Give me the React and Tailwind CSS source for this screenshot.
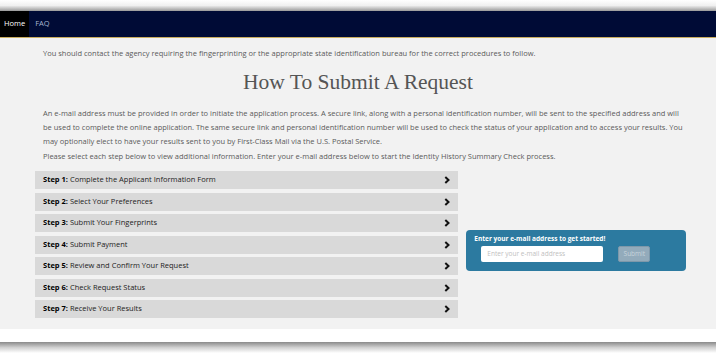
import React from "react";

const steps = [
  "Complete the Applicant Information Form",
  "Select Your Preferences",
  "Submit Your Fingerprints",
  "Submit Payment",
  "Review and Confirm Your Request",
  "Check Request Status",
  "Receive Your Results",
];

function Chevron() {
  return (
    <svg width="6" height="8" viewBox="0 0 6 8" className="block">
      <polyline points="1.3,1 4.5,4 1.3,7" fill="none" stroke="#111" strokeWidth="2" />
    </svg>
  );
}

export default function App() {
  const font = { fontFamily: '"Open Sans", "Noto Sans", sans-serif' };
  return (
    <div className="w-[716px] h-[353px] bg-white overflow-hidden flex flex-col" style={font}>
      <div className="h-[11px] bg-gradient-to-b from-white via-[#f0f0f0] to-[#9a9a9a]" />
      <nav className="h-[27px] bg-[#000b36] border-b border-[#c9ad5f] flex items-stretch">
        <div className="bg-[#000000] px-[4px] flex items-center text-white text-[7.5px]">Home</div>
        <div className="px-[6px] flex items-center text-[#a9b4cf] text-[7.5px]">FAQ</div>
      </nav>
      <main className="h-[291px] bg-[#f2f2f2] pl-[35px] pr-[30px] pt-[8px] text-[#5a5a5a]">
        <p className="pl-[8px] text-[7.5px] leading-[14px]">
          You should contact the agency requiring the fingerprinting or the appropriate state identification bureau for the correct procedures to follow.
        </p>
        <h1
          className="text-center text-[21.5px] leading-[30px] mt-[7px] mb-[9px] text-[#555] pr-[5px]"
          style={{ fontFamily: '"Liberation Serif", Georgia, serif' }}
        >
          How To Submit A Request
        </h1>
        <p className="pl-[8px] text-[7.5px] leading-[14px]">
          An e-mail address must be provided in order to initiate the application process. A secure link, along with a personal identification number, will be sent to the specified address and will be used to complete the online application. The same secure link and personal identification number will be used to check the status of your application and to access your results. You may optionally elect to have your results sent to you by First-Class Mail via the U.S. Postal Service.
        </p>
        <p className="pl-[8px] text-[7.5px] leading-[14px] mt-[1px]">
          Please select each step below to view additional information. Enter your e-mail address below to start the Identity History Summary Check process.
        </p>
        <div className="flex mt-[8px] gap-[8px]">
          <div className="w-[424px] flex flex-col gap-[3.5px]">
            {steps.map((s, i) => (
              <div key={i} className="h-[18px] bg-[#d9d9d9] flex items-center justify-between pl-[8px] pr-[8px] text-[7.5px] text-[#222]">
                <span>
                  <span className="font-bold text-black">Step {i + 1}:</span> {s}
                </span>
                <Chevron />
              </div>
            ))}
          </div>
          <div className="w-[220px] h-[41px] mt-[59px] bg-[#2c7aa0] rounded-[4px] px-[8px] pt-[5px]">
            <div className="text-white font-bold text-[6.5px] leading-[8px]">Enter your e-mail address to get started!</div>
            <div className="flex items-center mt-[3px] pl-[7px]">
              <div className="w-[122px] h-[16px] bg-white rounded-[2px] flex items-center px-[6px] text-[6.5px] text-[#c0c0c0]">
                Enter your e-mail address
              </div>
              <div className="ml-[15px] w-[32px] h-[16px] bg-[#93abbb] border border-[#7e98aa] rounded-[2px] flex items-center justify-center text-[6.5px] text-[#c8d4dc]">
                Submit
              </div>
            </div>
          </div>
        </div>
      </main>
      <div className="h-[13px] bg-white" />
      <div className="flex-1 bg-gradient-to-b from-[#8a8a8a] via-[#d0d0d0] to-white" />
    </div>
  );
}
